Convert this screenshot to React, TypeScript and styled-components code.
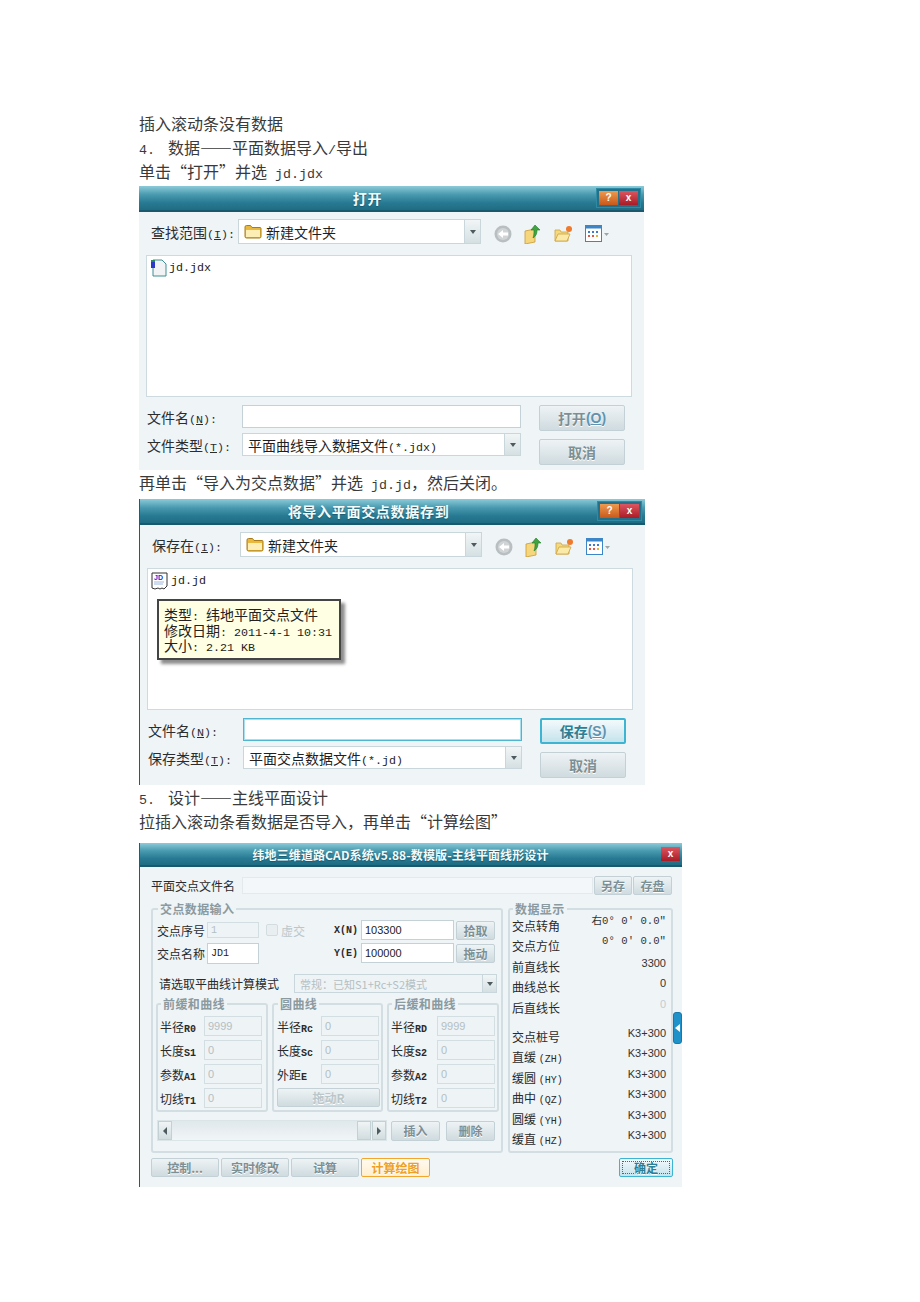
import React from "react";
import styled, { createGlobalStyle } from "styled-components";

const cjk = `"Noto Sans CJK SC", "Liberation Sans", sans-serif`;
const mono = `"Liberation Mono", "Noto Sans CJK SC", monospace`;
const sans = `"Liberation Sans", "Noto Sans CJK SC", sans-serif`;

const Global = createGlobalStyle`
  html, body { margin: 0; padding: 0; background: #fff; }
  * { box-sizing: border-box; }
`;

const Page = styled.div`
  width: 920px;
  min-height: 1302px;
  padding: 111px 0 0 139px;
  font-family: ${cjk};
  background: #fff;
`;
const Line = styled.div`
  height: 24px;
  line-height: 24px;
  font-size: 16px;
  color: #3a3a3a;
  white-space: nowrap;
`;
const Latin = styled.span<{ $size?: number; $gap?: number }>`
  font-family: ${mono};
  font-size: ${(p) => p.$size || 13.33}px;
  margin-right: ${(p) => p.$gap || 0}px;
  white-space: pre;
`;

/* window chrome */
const Win = styled.div<{ $w: number; $h: number; $top: number; $edge?: boolean }>`
  position: relative;
  width: ${(p) => p.$w}px;
  height: ${(p) => p.$h}px;
  margin-top: ${(p) => p.$top}px;
  background: #eff4f7;
  border-left: ${(p) => (p.$edge ? "1px solid #1c5f74" : "none")};
  display: flex;
  flex-direction: column;
`;
const TitleBar = styled.div<{ $h: number }>`
  height: ${(p) => p.$h}px;
  flex: none;
  display: flex;
  align-items: center;
  background: linear-gradient(#8ccbd9 0%, #4a9bb0 35%, #277a92 70%, #1e6c84 100%);
  border-bottom: 2px solid #18596e;
`;
const TitleText = styled.div<{ $size: number; $track: number }>`
  flex: 1;
  text-align: center;
  color: #f4fbfc;
  font-weight: 700;
  font-size: ${(p) => p.$size}px;
  letter-spacing: ${(p) => p.$track}px;
  text-shadow: 0 1px 1px #1a5a6e;
  white-space: nowrap;
`;
const TitleButtons = styled.div`
  display: flex;
  gap: 1px;
  padding: 2px;
  margin-right: 3px;
  background: #23708a;
  border: 1px solid #2f8ba3;
`;
const TitleButton = styled.div<{ $kind: "help" | "close"; $end?: number }>`
  width: 19px;
  height: 14px;
  margin-right: ${(p) => p.$end || 0}px;
  display: flex;
  align-items: center;
  justify-content: center;
  color: #fff;
  font: 700 10px/14px ${sans};
  background: ${(p) =>
    p.$kind === "help"
      ? "linear-gradient(#ee9a4e, #c9581a)"
      : "linear-gradient(#dd5560, #a81c26)"};
`;

/* shared controls */
const Btn = styled.div<{ $w: number; $h: number; $size?: number; $kind?: "plain" | "focus" | "orange" | "ok" | "flat" }>`
  width: ${(p) => p.$w}px;
  height: ${(p) => p.$h}px;
  flex: none;
  display: flex;
  align-items: center;
  justify-content: center;
  font-size: ${(p) => p.$size || 12}px;
  font-weight: 700;
  white-space: nowrap;
  border-radius: 2px;
  text-shadow: 0 1px 0 #fff;
  color: ${(p) =>
    p.$kind === "focus" || p.$kind === "ok" ? "#2b7e94" : p.$kind === "orange" ? "#ee9f25" : p.$kind === "flat" ? "#b9c6ca" : "#7c8f95"};
  border: ${(p) => (p.$kind === "focus" ? 2 : 1)}px solid
    ${(p) =>
      p.$kind === "focus" || p.$kind === "ok" ? "#3db4d2" : p.$kind === "orange" ? "#f2a72c" : "#c3d1d6"};
  background: ${(p) =>
    p.$kind === "focus" || p.$kind === "ok"
      ? "linear-gradient(#f3fafc, #c5e3ec)"
      : p.$kind === "orange"
      ? "linear-gradient(#fffaf0, #ffefcf)"
      : "linear-gradient(#eef3f5, #cfdbdf)"};
`;
const Mnemonic = styled.span`
  font-family: ${sans};
  color: #5f93b0;
`;
const Under = styled.span`
  text-decoration: underline;
`;
const Input = styled.div<{ $w: number; $h: number; $off?: boolean; $focus?: boolean }>`
  width: ${(p) => p.$w}px;
  height: ${(p) => p.$h}px;
  flex: none;
  display: flex;
  align-items: center;
  padding-left: 3px;
  font: 11px ${sans};
  color: ${(p) => (p.$off ? "#b4bfc3" : "#222")};
  background: ${(p) => (p.$off ? "#eef3f6" : "#fff")};
  border: 1px solid ${(p) => (p.$focus ? "#4fb6d2" : p.$off ? "#d3dee2" : "#c4d2d7")};
  box-shadow: ${(p) => (p.$focus ? "inset 0 0 0 1px #a9dfec" : "none")};
`;

/* file dialog */
const FileBody = styled.div<{ $dx: number }>`
  flex: 1;
  padding: 7px 0 0 ${(p) => p.$dx}px;
`;
const Toolbar = styled.div`
  display: flex;
  align-items: center;
  height: 25px;
  padding-left: 5px;
`;
const ToolLabel = styled.div<{ $w: number }>`
  width: ${(p) => p.$w}px;
  flex: none;
  font-size: 14px;
  color: #2c2c2c;
  white-space: nowrap;
`;
const Combo = styled.div<{ $w: number; $h: number; $size: number; $off?: boolean }>`
  width: ${(p) => p.$w}px;
  height: ${(p) => p.$h}px;
  flex: none;
  display: flex;
  align-items: center;
  padding-left: 5px;
  gap: 4px;
  font-size: ${(p) => p.$size}px;
  color: ${(p) => (p.$off ? "#b4bfc3" : "#1f1f1f")};
  background: ${(p) => (p.$off ? "#eef3f6" : "#fff")};
  border: 1px solid #c9d7dc;
  white-space: nowrap;
  overflow: hidden;
`;
const ComboText = styled.div`
  flex: 1;
  overflow: hidden;
`;
const ComboArrow = styled.div<{ $w: number }>`
  width: ${(p) => p.$w}px;
  height: 100%;
  flex: none;
  display: flex;
  align-items: center;
  justify-content: center;
  background: linear-gradient(#f1f5f6, #d5e0e3);
  border-left: 1px solid #c9d7dc;
  &::after {
    content: "";
    border: 3px solid transparent;
    border-top: 4px solid #4d5a5f;
    border-bottom: 0;
  }
`;
const ToolIcons = styled.div`
  display: flex;
  align-items: center;
  gap: 12px;
  margin: 4px 0 0 13px;
`;
const FileList = styled.div`
  position: relative;
  width: 486px;
  height: 142px;
  margin-top: 11px;
  padding: 3px;
  background: #fff;
  border: 1px solid #cddadf;
`;
const FileEntry = styled.div`
  display: flex;
  align-items: center;
  gap: 2px;
  height: 17px;
  font-family: ${mono};
  font-size: 11.67px;
  color: #222;
`;
const Tip = styled.div`
  position: absolute;
  left: 9px;
  top: 30px;
  width: 184px;
  height: 61px;
  padding: 6px 0 0 5px;
  font-size: 14px;
  color: #222;
  white-space: nowrap;
  background: #ffffe4;
  border: 2px solid #444;
  box-shadow: 4px 4px 3px #8e8e8e;
`;
const TipLine = styled.div`
  height: 15.5px;
  line-height: 15.5px;
`;
const FileForm = styled.div`
  display: flex;
  margin-top: 8px;
`;
const FormLeft = styled.div`
  width: 393px;
  display: flex;
  flex-direction: column;
  gap: 5px;
`;
const FormRow = styled.div`
  display: flex;
  align-items: center;
`;
const FormLabel = styled.div`
  width: 96px;
  flex: none;
  padding-left: 1px;
  font-size: 14px;
  color: #2c2c2c;
  white-space: nowrap;
`;
const FormRight = styled.div`
  display: flex;
  flex-direction: column;
  gap: 8px;
`;

const BackIcon = () => (
  <svg width="18" height="18" viewBox="0 0 18 18">
    <circle cx="9" cy="9" r="8.5" fill="#b9bfc1" />
    <circle cx="9" cy="9" r="6" fill="#d0d4d6" />
    <path d="M4 9l5-4v2.500h5v3H9V13z" fill="#fff" />
  </svg>
);
const UpIcon = () => (
  <svg width="18" height="20" viewBox="0 0 18 20">
    <path d="M1 7l10-2v13l-10 2z" fill="#f5d67a" stroke="#c89a35" strokeWidth="0.8" />
    <path d="M11 1l5 5h-3c0 4-1 6-4 8 1-3 1-5 1-8H7z" fill="#3fa43f" stroke="#237a2a" strokeWidth="0.6" />
  </svg>
);
const NewFolderIcon = () => (
  <svg width="19" height="18" viewBox="0 0 19 18">
    <path d="M1 5h5l1 2h7v9H1z" fill="#f4d97f" stroke="#cda23f" strokeWidth="0.8" />
    <path d="M1 16l3-7h12l-3 7z" fill="#fbe9a8" stroke="#cda23f" strokeWidth="0.8" />
    <circle cx="15" cy="4" r="3" fill="#ef7a2b" />
  </svg>
);
const ViewsIcon = () => (
  <svg width="24" height="18" viewBox="0 0 24 18">
    <rect x="0.5" y="0.5" width="16" height="16" fill="#fff" stroke="#3c86c8" />
    <rect x="0.5" y="0.5" width="16" height="3" fill="#3c86c8" />
    <path d="M3 6h2v2H3zM7 6h2v2H7zM11 6h2v2h-2z" fill="#3c7cc8" />
    <path d="M3 10h2v2H3zM7 10h2v2H7z" fill="#e0574a" />
    <path d="M11 10h2v2h-2z" fill="#e2b23c" />
    <path d="M19 8h5l-2.500 3z" fill="#9aa6aa" />
  </svg>
);
const FolderIcon = () => (
  <svg width="18" height="16" viewBox="0 0 18 16">
    <path d="M1 3q0-1.500 1.500-1.500h4l1.500 2h8q1 0 1 1v8q0 1.500-1.500 1.500h-13q-1.500 0-1.500-1.500z" fill="#e8b83f" stroke="#a97c1a" />
    <path d="M2 6h14v7H2z" fill="#fdeeb5" />
  </svg>
);
const JdxIcon = () => (
  <svg width="17" height="18" viewBox="0 0 17 18">
    <path d="M3 1h9l4 4v12H3z" fill="#f1f3f4" stroke="#3f8f96" />
    <rect x="1" y="1" width="4" height="8" fill="#2b38c8" />
    <rect x="1" y="1" width="4" height="2" fill="#2a8a5a" />
  </svg>
);
const JdIcon = () => (
  <svg width="18" height="18" viewBox="0 0 18 18">
    <path d="M1 1h15v13l-3 3-2-1-2 1-2-1-3 1-3-1z" fill="#fff" stroke="#333" />
    <text x="3" y="8" fontSize="7" fontWeight="700" fontFamily={sans} fill="#2433d8">JD</text>
    <path d="M3 10h10M3 12h9" stroke="#9db7e0" />
  </svg>
);
const Icons = () => (
  <ToolIcons>
    <BackIcon />
    <UpIcon />
    <NewFolderIcon />
    <ViewsIcon />
  </ToolIcons>
);

type FileDialogProps = {
  title: string;
  lookIn: string;
  typeLabel: string;
  typeValue: React.ReactNode;
  primary: React.ReactNode;
  icon: React.ReactNode;
  entry: string;
  saving?: boolean;
  h: number;
  w: number;
  top: number;
  dx: number;
  tip?: React.ReactNode;
};

const FileDialog: React.FC<FileDialogProps> = (p) => (
  <Win $w={p.w} $h={p.h} $top={p.top} $edge={p.saving}>
    <TitleBar $h={26}>
      <TitleText $size={14} $track={0.7}>{p.title}</TitleText>
      <TitleButtons>
        <TitleButton $kind="help">?</TitleButton>
        <TitleButton $kind="close">x</TitleButton>
      </TitleButtons>
    </TitleBar>
    <FileBody $dx={p.dx}>
      <Toolbar>
        <ToolLabel $w={p.saving ? 88 : 87}>
          {p.lookIn}
          <Latin $size={11.67}>(<Under>I</Under>):</Latin>
        </ToolLabel>
        <Combo $w={p.saving ? 242 : 243} $h={25} $size={14}>
          <FolderIcon />
          <ComboText>新建文件夹</ComboText>
          <ComboArrow $w={16} />
        </Combo>
        <Icons />
      </Toolbar>
      <FileList>
        <FileEntry>
          {p.icon}
          {p.entry}
        </FileEntry>
        {p.tip}
      </FileList>
      <FileForm>
        <FormLeft>
          <FormRow>
            <FormLabel>
              文件名<Latin $size={11.67}>(<Under>N</Under>):</Latin>
            </FormLabel>
            <Input $w={279} $h={23} $focus={p.saving} />
          </FormRow>
          <FormRow>
            <FormLabel>
              {p.typeLabel}
              <Latin $size={11.67}>(<Under>T</Under>):</Latin>
            </FormLabel>
            <Combo $w={279} $h={23} $size={14}>
              <ComboText>{p.typeValue}</ComboText>
              <ComboArrow $w={16} />
            </Combo>
          </FormRow>
        </FormLeft>
        <FormRight>
          <Btn $w={86} $h={26} $size={14} $kind={p.saving ? "focus" : "plain"}>
            {p.primary}
          </Btn>
          <Btn $w={86} $h={26} $size={14}>取消</Btn>
        </FormRight>
      </FileForm>
    </FileBody>
  </Win>
);

/* design dialog */
const CadBody = styled.div`
  flex: 1;
  padding: 9px 9px 0 11px;
  font-size: 12px;
  color: #2a2a2a;
  display: flex;
  flex-direction: column;
`;
const NameRow = styled.div`
  display: flex;
  align-items: center;
  gap: 1px;
`;
const NameLabel = styled.div`
  width: 90px;
  flex: none;
`;
const NameField = styled.div`
  width: 351px;
  height: 17px;
  flex: none;
  background: #f3f7f9;
  border: 1px solid #e2eaed;
`;
const Columns = styled.div`
  display: flex;
  gap: 5px;
  margin-top: 13px;
`;
const Group = styled.div<{ $w: number; $h: number; $pad: number }>`
  width: ${(p) => p.$w}px;
  height: ${(p) => p.$h}px;
  flex: none;
  border: 2px solid #d3dee2;
  border-radius: 3px;
  padding: 0 ${(p) => p.$pad}px;
`;
const Legend = styled.div`
  width: fit-content;
  height: 16px;
  line-height: 16px;
  margin: -9px 0 0 1px;
  padding: 0 2px;
  background: #eff4f7;
  font-size: 12px;
  font-weight: 700;
  color: #8b9a9f;
  letter-spacing: 0.4px;
  white-space: nowrap;
`;
const PointGrid = styled.div`
  display: grid;
  grid-template-columns: 50px 52px 75px 27px 93px 39px;
  grid-auto-rows: 20px;
  row-gap: 3px;
  align-items: center;
  margin-top: 3px;
`;
const Check = styled.div`
  display: flex;
  align-items: center;
  gap: 3px;
  padding-left: 7px;
  color: #bcc7cb;
`;
const CheckBox = styled.div`
  width: 12px;
  height: 12px;
  background: #e9eff1;
  border: 1px solid #d3dde1;
  border-radius: 2px;
`;
const Small = styled.span<{ $bold?: boolean }>`
  font-family: ${mono};
  font-size: 10px;
  font-weight: ${(p) => (p.$bold ? 700 : 400)};
`;
const PickBtn = styled(Btn)`
  margin-left: 2px;
`;
const ModeRow = styled.div`
  display: flex;
  align-items: center;
  margin-top: 11px;
`;
const ModeLabel = styled.div`
  width: 137px;
  padding-left: 2px;
  flex: none;
`;
const SubGroups = styled.div`
  display: flex;
  gap: 4px;
  margin: 10px 0 0 -1px;
`;
const SubRows = styled.div`
  display: flex;
  flex-direction: column;
  gap: 4px;
  margin-top: 4px;
`;
const SubRow = styled.div<{ $label: number }>`
  display: grid;
  grid-template-columns: ${(p) => p.$label}px 58px;
  align-items: center;
  height: 20px;
`;
const ScrollRow = styled.div`
  display: flex;
  align-items: center;
  margin-top: 8px;
`;
const Scrollbar = styled.div`
  width: 230px;
  height: 21px;
  flex: none;
  display: flex;
  justify-content: space-between;
  background: linear-gradient(#dfe8eb, #f1f5f7);
  border: 1px solid #dbe5e8;
  margin-right: 4px;
`;
const ScrollEnd = styled.div`
  display: flex;
  gap: 1px;
`;
const ScrollBtn = styled.div<{ $dir?: "left" | "right" }>`
  width: 14px;
  height: 19px;
  display: flex;
  align-items: center;
  justify-content: center;
  background: linear-gradient(#f0f4f5, #d2dde0);
  border: 1px solid #c3d0d4;
  &::after {
    content: "";
    display: ${(p) => (p.$dir ? "block" : "none")};
    border: 4px solid transparent;
    border-left: ${(p) => (p.$dir === "right" ? "4px solid #4d5a5f" : "0")};
    border-right: ${(p) => (p.$dir === "left" ? "4px solid #4d5a5f" : "0")};
  }
`;
const ActionGap = styled.div`
  width: 6px;
  flex: none;
`;
const ReadRows = styled.div`
  margin-top: -1px;
`;
const ReadRow = styled.div<{ $top?: number }>`
  display: flex;
  justify-content: space-between;
  height: 20.4px;
  line-height: 20.4px;
  margin-top: ${(p) => p.$top || 0}px;
  padding-right: 3px;
  white-space: nowrap;
`;
const ReadValue = styled.div<{ $off?: boolean }>`
  margin-top: -1px;
  font: 11px/14px ${sans};
  color: ${(p) => (p.$off ? "#c3ccd0" : "#333")};
`;
const AngleValue = styled(ReadValue)`
  margin-top: -2px;
  font: 10.67px/14px ${mono};
  white-space: pre;
`;
const Footer = styled.div`
  display: flex;
  gap: 2px;
  margin-top: 5px;
`;
const FooterGap = styled.div`
  flex: 1;
`;
const OkLabel = styled.div`
  width: 48px;
  height: 13px;
  line-height: 12px;
  text-align: center;
  border: 1px dotted #3b6f7e;
`;
const Handle = styled.div`
  position: absolute;
  right: 0;
  top: 169px;
  width: 9px;
  height: 32px;
  display: flex;
  align-items: center;
  justify-content: flex-start;
  background: #1f93c9;
  border: 1px solid #1878a8;
  border-radius: 3px;
  &::after {
    content: "";
    border: 4px solid transparent;
    border-right: 5px solid #fff;
    border-left: 0;
    margin-left: 1px;
  }
`;

const SubGroup: React.FC<{
  w: number;
  title: string;
  pad?: number;
  label?: number;
  rows: [string, string, string?][];
  children?: React.ReactNode;
}> = ({ w, title, pad = 2, label = 44, rows, children }) => (
  <Group $w={w} $h={109} $pad={pad}>
    <Legend>{title}</Legend>
    <SubRows>
      {rows.map(([cn, en, val]) => (
        <SubRow $label={label} key={cn}>
          <div>
            {cn}
            <Small $bold>{en}</Small>
          </div>
          <Input $w={58} $h={20} $off>
            {val || "0"}
          </Input>
        </SubRow>
      ))}
      {children}
    </SubRows>
  </Group>
);

const lengths: [string, string, boolean?][] = [
  ["前直线长", "3300"],
  ["曲线总长", "0"],
  ["后直线长", "0", true],
];
const stakes: [string, string?][] = [
  ["交点桩号"],
  ["直缓", "(ZH)"],
  ["缓圆", "(HY)"],
  ["曲中", "(QZ)"],
  ["圆缓", "(YH)"],
  ["缓直", "(HZ)"],
];

const CadDialog = () => (
  <Win $w={543} $h={344} $top={10} $edge>
    <TitleBar $h={24}>
      <TitleText $size={12} $track={0.1}>纬地三维道路CAD系统v5.88-数模版-主线平面线形设计</TitleText>
      <TitleButton $kind="close" $end={2}>x</TitleButton>
    </TitleBar>
    <CadBody>
      <NameRow>
        <NameLabel>平面交点文件名</NameLabel>
        <NameField />
        <Btn $w={38} $h={19}>另存</Btn>
        <Btn $w={39} $h={19}>存盘</Btn>
      </NameRow>
      <Columns>
        <Group $w={352} $h={245} $pad={4}>
          <Legend>交点数据输入</Legend>
          <PointGrid>
            <div>交点序号</div>
            <Input $w={52} $h={16} $off>
              <Small>1</Small>
            </Input>
            <Check>
              <CheckBox />
              虚交
            </Check>
            <Small $bold>X(N)</Small>
            <Input $w={93} $h={20}>103300</Input>
            <PickBtn $w={39} $h={19}>拾取</PickBtn>
            <div>交点名称</div>
            <Input $w={52} $h={21}>
              <Small>JD1</Small>
            </Input>
            <div />
            <Small $bold>Y(E)</Small>
            <Input $w={93} $h={20}>100000</Input>
            <PickBtn $w={39} $h={19}>拖动</PickBtn>
          </PointGrid>
          <ModeRow>
            <ModeLabel>请选取平曲线计算模式</ModeLabel>
            <Combo $w={203} $h={19} $size={11} $off>
              <ComboText>常规：已知S1+Rc+S2模式</ComboText>
              <ComboArrow $w={14} />
            </Combo>
          </ModeRow>
          <SubGroups>
            <SubGroup
              w={112}
              title="前缓和曲线"
              rows={[
                ["半径", "R0", "9999"],
                ["长度", "S1"],
                ["参数", "A1"],
                ["切线", "T1"],
              ]}
            />
            <SubGroup
              w={111}
              pad={3}
              title="圆曲线"
              rows={[
                ["半径", "Rc"],
                ["长度", "Sc"],
                ["外距", "E"],
              ]}
            >
              <Btn $w={103} $h={19} $kind="flat">拖动R</Btn>
            </SubGroup>
            <SubGroup
              w={112}
              title="后缓和曲线"
              label={46}
              rows={[
                ["半径", "RD", "9999"],
                ["长度", "S2"],
                ["参数", "A2"],
                ["切线", "T2"],
              ]}
            />
          </SubGroups>
          <ScrollRow>
            <Scrollbar>
              <ScrollBtn $dir="left" />
              <ScrollEnd>
                <ScrollBtn />
                <ScrollBtn $dir="right" />
              </ScrollEnd>
            </Scrollbar>
            <Btn $w={49} $h={20}>插入</Btn>
            <ActionGap />
            <Btn $w={49} $h={20}>删除</Btn>
          </ScrollRow>
        </Group>
        <Group $w={165} $h={245} $pad={2}>
          <Legend>数据显示</Legend>
          <ReadRows>
            <ReadRow>
              <div>交点转角</div>
              <AngleValue>右0° 0′ 0.0″</AngleValue>
            </ReadRow>
            <ReadRow>
              <div>交点方位</div>
              <AngleValue>0° 0′ 0.0″</AngleValue>
            </ReadRow>
            {lengths.map(([label, value, off]) => (
              <ReadRow key={label}>
                <div>{label}</div>
                <ReadValue $off={off}>{value}</ReadValue>
              </ReadRow>
            ))}
            {stakes.map(([cn, en], i) => (
              <ReadRow key={cn} $top={i === 0 ? 9 : 0}>
                <div>
                  {cn} <Small>{en}</Small>
                </div>
                <ReadValue>K3+300</ReadValue>
              </ReadRow>
            ))}
          </ReadRows>
        </Group>
      </Columns>
      <Footer>
        <Btn $w={68} $h={19}>控制...</Btn>
        <Btn $w={68} $h={19}>实时修改</Btn>
        <Btn $w={68} $h={19}>试算</Btn>
        <Btn $w={69} $h={19} $kind="orange">计算绘图</Btn>
        <FooterGap />
        <Btn $w={54} $h={19} $kind="ok">
          <OkLabel>确定</OkLabel>
        </Btn>
      </Footer>
    </CadBody>
    <Handle />
  </Win>
);

const App: React.FC = () => (
  <Page lang="zh-CN">
    <Global />
    <Line>插入滚动条没有数据</Line>
    <Line>
      <Latin $gap={13}>4.</Latin>数据——平面数据导入<Latin>/</Latin>导出
    </Line>
    <Line>
      单击“打开”并选<Latin> jd.jdx</Latin>
    </Line>
    <FileDialog
      w={505}
      h={284}
      top={3}
      dx={7}
      title="打开"
      lookIn="查找范围"
      typeLabel="文件类型"
      typeValue={
        <>
          平面曲线导入数据文件<Latin $size={11.67}>(*.jdx)</Latin>
        </>
      }
      primary={
        <>
          打开<Mnemonic>(<Under>O</Under>)</Mnemonic>
        </>
      }
      icon={<JdxIcon />}
      entry="jd.jdx"
    />
    <Line>
      再单击“导入为交点数据”并选<Latin> jd.jd</Latin>，然后关闭。
    </Line>
    <FileDialog
      w={506}
      h={286}
      top={5}
      dx={7}
      saving
      title="将导入平面交点数据存到"
      lookIn="保存在"
      typeLabel="保存类型"
      typeValue={
        <>
          平面交点数据文件<Latin $size={11.67}>(*.jd)</Latin>
        </>
      }
      primary={
        <>
          保存<Mnemonic>(<Under>S</Under>)</Mnemonic>
        </>
      }
      icon={<JdIcon />}
      entry="jd.jd"
      tip={
        <Tip>
          <TipLine>类型<Latin $size={11.67}>: </Latin>纬地平面交点文件</TipLine>
          <TipLine>修改日期<Latin $size={11.67}>: 2011-4-1 10:31</Latin></TipLine>
          <TipLine>大小<Latin $size={11.67}>: 2.21 KB</Latin></TipLine>
        </Tip>
      }
    />
    <Line>
      <Latin $gap={13}>5.</Latin>设计——主线平面设计
    </Line>
    <Line>拉插入滚动条看数据是否导入，再单击“计算绘图”</Line>
    <CadDialog />
  </Page>
);

export default App;
